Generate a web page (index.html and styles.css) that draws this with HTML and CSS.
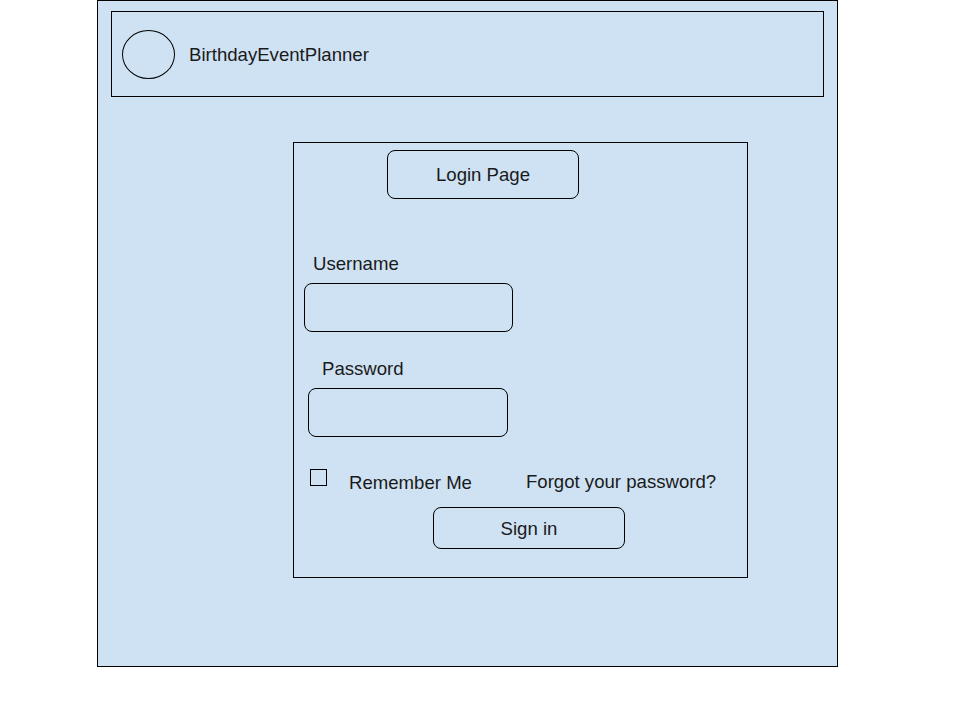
FILE: index.html
```html
<!DOCTYPE html>
<html>
<head>
<meta charset="utf-8">
<link rel="stylesheet" href="styles.css">
</head>
<body>
<div class="frame">
  <div class="header">
    <div class="logo"></div>
    <div class="brand">BirthdayEventPlanner</div>
  </div>
  <div class="panel">
    <div class="title-btn">Login Page</div>
    <div class="label label-user">Username</div>
    <div class="input input-user"></div>
    <div class="label label-pass">Password</div>
    <div class="input input-pass"></div>
    <div class="options">
      <div class="checkbox"></div>
      <div class="remember">Remember Me</div>
      <div class="forgot">Forgot your password?</div>
    </div>
    <div class="signin">Sign in</div>
  </div>
</div>
</body>
</html>
```
FILE: styles.css
```css
html, body {
  margin: 0;
  padding: 0;
  background: #ffffff;
}
body {
  font-family: "Liberation Sans", Arial, sans-serif;
  font-size: 18.6px;
  color: #1a1a1a;
}
.frame {
  box-sizing: border-box;
  margin-left: 97px;
  width: 741px;
  height: 667px;
  border: 1px solid #000;
  background: #cfe2f3;
  padding-top: 10px;
}
.header {
  box-sizing: border-box;
  margin-left: 13px;
  width: 713px;
  height: 86px;
  border: 1px solid #000;
  display: flex;
  align-items: center;
  padding-left: 10px;
}
.logo {
  box-sizing: border-box;
  width: 53px;
  height: 49px;
  border: 1px solid #000;
  border-radius: 50%;
  margin-top: 1px;
}
.brand {
  margin-left: 14px;
  margin-top: 1px;
}
.panel {
  box-sizing: border-box;
  margin-top: 45px;
  margin-left: 195px;
  width: 455px;
  height: 436px;
  border: 1px solid #000;
  padding-top: 7px;
}
.title-btn, .signin {
  box-sizing: border-box;
  border: 1px solid #000;
  border-radius: 8px;
  display: flex;
  align-items: center;
  justify-content: center;
}
.title-btn {
  margin-left: 93px;
  width: 192px;
  height: 49px;
}
.label {
  line-height: 20px;
}
.label-user {
  margin-top: 55px;
  margin-left: 19px;
}
.input {
  box-sizing: border-box;
  border: 1px solid #000;
  border-radius: 8px;
  height: 49px;
}
.input-user {
  margin-top: 9px;
  margin-left: 10px;
  width: 209px;
}
.label-pass {
  margin-top: 27px;
  margin-left: 28px;
}
.input-pass {
  margin-top: 9px;
  margin-left: 14px;
  width: 200px;
}
.options {
  display: flex;
  align-items: flex-start;
  margin-top: 32px;
  height: 38px;
}
.checkbox {
  box-sizing: border-box;
  width: 17px;
  height: 17px;
  border: 1px solid #000;
  margin-left: 16px;
}
.remember {
  margin-left: 22px;
  margin-top: 4px;
  line-height: 20px;
}
.forgot {
  margin-left: 54px;
  margin-top: 3px;
  line-height: 20px;
}
.signin {
  margin-left: 139px;
  width: 192px;
  height: 42px;
  padding-top: 1px;
}
```
